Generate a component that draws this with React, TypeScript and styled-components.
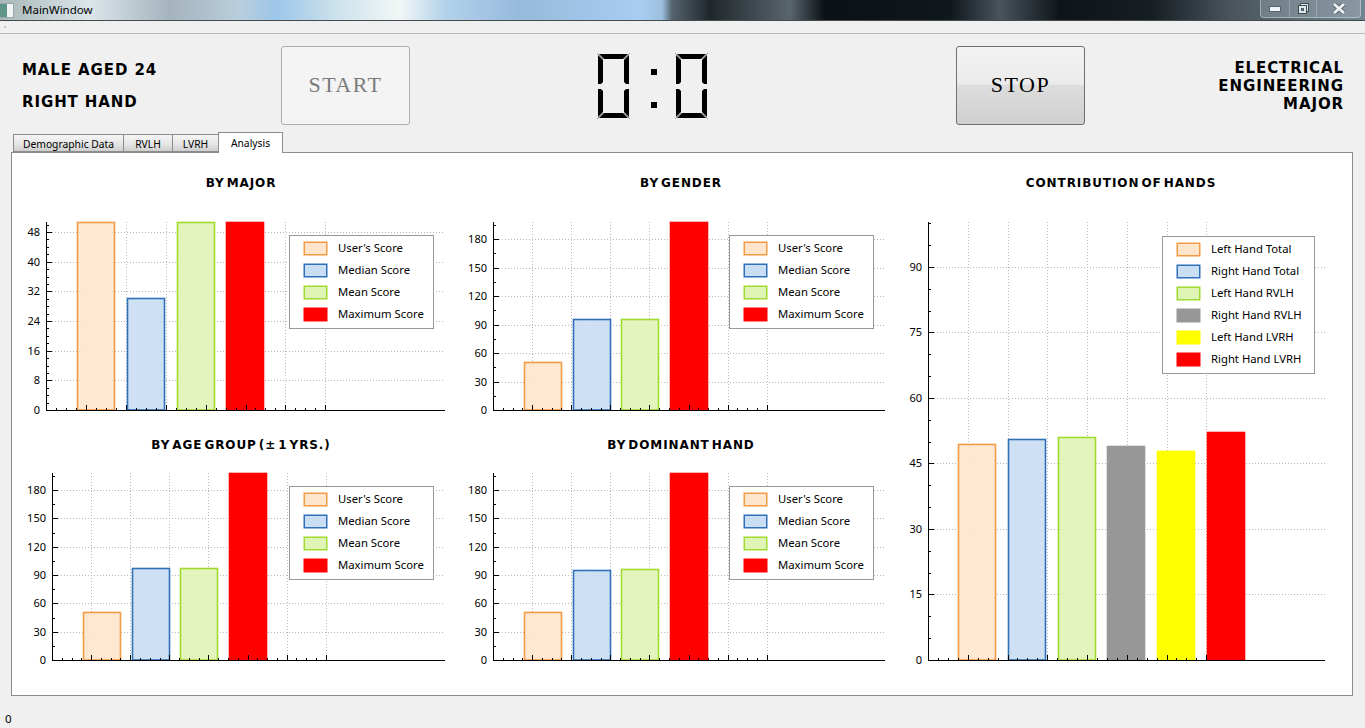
import React from "react";
import styled, { createGlobalStyle } from "styled-components";

const UI_FONT = `"Noto Sans", "DejaVu Sans", sans-serif`;
const HEAD_FONT = `"DejaVu Sans", "Liberation Sans", sans-serif`;

const GlobalStyle = createGlobalStyle`
  html, body {
    margin: 0;
    padding: 0;
    background: #f0f0f0;
  }
  #root {
    width: 1365px;
    height: 728px;
    overflow: hidden;
  }
`;

const Window = styled.div`
  width: 1365px;
  height: 728px;
  display: flex;
  flex-direction: column;
  background: #f0f0f0;
  color: #000;
  font-family: ${UI_FONT};
`;

const TitleBar = styled.div`
  height: 21px;
  flex: none;
  display: flex;
  align-items: flex-start;
  box-sizing: border-box;
  border-bottom: 1px solid #3d4a50;
  background: linear-gradient(
    90deg,
    #a9b7b8 0,
    #dbe6ea 90px,
    #a5b3bd 170px,
    #b9cedd 240px,
    #9cc6e8 275px,
    #cfe3ec 340px,
    #f2f7f6 400px,
    #b3d2ea 445px,
    #97b9dc 520px,
    #a8cdf0 640px,
    #9dbfdd 662px,
    #56646e 672px,
    #20272c 710px,
    #59656c 790px,
    #0b1116 825px,
    #10171d 950px,
    #49545b 1000px,
    #0e141a 1060px,
    #161d23 1150px,
    #49545b 1230px,
    #75858f 1365px
  );
`;

const AppIcon = styled.div`
  width: 14px;
  height: 15px;
  margin: 3px 8px 0 0;
  flex: none;
  box-sizing: border-box;
  border: 1px solid #9aa7a8;
  border-left: none;
  background: linear-gradient(90deg, #5f9488 0, #5f9488 55%, #f2f4f4 55%);
`;

const TitleText = styled.span`
  font-size: 11.5px;
  line-height: 20px;
`;

const WindowButtons = styled.div`
  margin-left: auto;
  margin-right: 4px;
  height: 18px;
  display: flex;
  box-sizing: border-box;
  border: 1px solid rgba(225, 235, 240, 0.45);
  border-top: none;
  border-radius: 0 0 4px 4px;
  background: rgba(190, 205, 215, 0.28);
`;

const WindowButton = styled.div<{ $width: number }>`
  width: ${(p) => p.$width}px;
  box-sizing: border-box;
  display: flex;
  align-items: center;
  justify-content: center;
  border-left: 1px solid rgba(225, 235, 240, 0.3);
  &:first-child {
    border-left: none;
  }
`;

const MenuBar = styled.div`
  height: 12px;
  flex: none;
  box-sizing: content-box;
  border-bottom: 1px solid #b9b9b9;
  display: flex;
  align-items: center;
  padding-left: 4px;
`;

const MenuDot = styled.div`
  width: 2px;
  height: 2px;
  background: #c4c4c4;
`;

const Header = styled.div`
  height: 98px;
  flex: none;
  box-sizing: border-box;
  padding: 12px 21px 0 22px;
  display: flex;
  align-items: flex-start;
`;

const HeaderLeft = styled.div`
  width: 259px;
  flex: none;
  padding-top: 8px;
`;

const HeaderRight = styled.div`
  width: 259px;
  height: 79px;
  flex: none;
  display: flex;
  flex-direction: column;
  justify-content: center;
  align-items: flex-end;
`;

const BoldLine = styled.div<{ $line: number }>`
  font-family: ${HEAD_FONT};
  font-weight: 700;
  font-size: 15px;
  letter-spacing: 0.9px;
  line-height: ${(p) => p.$line}px;
  white-space: nowrap;
`;

const BigButton = styled.button<{ $active?: boolean }>`
  width: 129px;
  height: 79px;
  flex: none;
  padding: 0 0 2px;
  box-sizing: border-box;
  border-radius: 3px;
  border: 1px solid ${(p) => (p.$active ? "#707070" : "#adadad")};
  background: ${(p) =>
    p.$active
      ? "linear-gradient(180deg, #f3f3f3 0, #ebebeb 48%, #dddddd 50%, #cfcfcf 100%)"
      : "#f4f4f4"};
  color: ${(p) => (p.$active ? "#000" : "#7b7b7b")};
  font-family: "Liberation Serif", serif;
  font-size: 22px;
  letter-spacing: 1.5px;
`;

const LcdSlot = styled.div`
  flex: 1;
  height: 79px;
  display: flex;
  justify-content: center;
  padding-right: 61px;
  padding-top: 7px;
  box-sizing: border-box;
`;

const Tabs = styled.div`
  height: 21px;
  flex: none;
  display: flex;
  align-items: flex-start;
  padding-left: 13px;
  position: relative;
  z-index: 1;
`;

const Tab = styled.div<{ $width: number; $selected?: boolean }>`
  width: ${(p) => p.$width}px;
  height: ${(p) => (p.$selected ? 21 : 18)}px;
  margin-top: ${(p) => (p.$selected ? 0 : 2)}px;
  box-sizing: border-box;
  border: 1px solid #8c8c8c;
  border-right-width: ${(p) => (p.$selected ? 1 : 0)}px;
  border-bottom: ${(p) => (p.$selected ? "none" : "1px solid #8c8c8c")};
  background: ${(p) =>
    p.$selected ? "#fff" : "linear-gradient(180deg, #f5f5f5 0, #e8e8e8 50%, #cfcfcf 100%)"};
  font-size: 10.3px;
  line-height: ${(p) => (p.$selected ? 20 : 18)}px;
  text-align: center;
  white-space: nowrap;
`;

const Panel = styled.div`
  width: 1342px;
  height: 544px;
  flex: none;
  margin: -1px 0 0 11px;
  box-sizing: border-box;
  border: 1px solid #8c8c8c;
  background: #fff;
  padding: 10px 0 0 9px;
  display: grid;
  grid-template-columns: repeat(3, 440px);
  grid-template-rows: 262px 255px;
`;

const ChartCard = styled.div<{ $tall?: boolean }>`
  display: flex;
  flex-direction: column;
  grid-row: ${(p) => (p.$tall ? "1 / span 2" : "auto")};
  grid-column: ${(p) => (p.$tall ? "3" : "auto")};
`;

const ChartTitle = styled.div`
  height: 40px;
  flex: none;
  font-family: ${HEAD_FONT};
  font-weight: 700;
  font-size: 12px;
  letter-spacing: 0.9px;
  word-spacing: -3px;
  line-height: 41px;
  text-align: center;
  white-space: nowrap;
`;

const PlotArea = styled.div`
  position: relative;
  flex: 1;
`;

const PlotSvg = styled.svg`
  display: block;
  font-family: ${UI_FONT};
  font-size: 11px;
`;

const Legend = styled.div<{ $top: number; $left: number; $width: number }>`
  position: absolute;
  top: ${(p) => p.$top}px;
  left: ${(p) => p.$left}px;
  width: ${(p) => p.$width}px;
  box-sizing: border-box;
  border: 1px solid #999;
  background: #fff;
  padding: 1px 0 3px 14px;
`;

const LegendRow = styled.div`
  height: 22px;
  display: flex;
  align-items: center;
  gap: 11px;
  font-size: 11.3px;
  white-space: nowrap;
`;

const LegendLabel = styled.span`
  margin-top: -1px;
`;

const Swatch = styled.span<{ $fill: string; $stroke: string }>`
  width: 23px;
  height: 13px;
  flex: none;
  box-sizing: border-box;
  background: ${(p) => p.$fill};
  border: 1.5px solid ${(p) => p.$stroke};
  box-shadow: 0 0 0 0.5px ${(p) => p.$stroke};
`;

const StatusBar = styled.div`
  flex: 1;
  padding: 15px 0 0 5px;
  font-size: 11.5px;
  line-height: 16px;
`;

type Series = { label: string; value: number; fill: string; stroke: string };

const orange = { fill: "#fee5cc", stroke: "#f39c45" };
const blue = { fill: "#c9def3", stroke: "#2f70b8" };
const green = { fill: "#e0f4b6", stroke: "#a0d92f" };
const red = { fill: "#ff0000", stroke: "#ff0000" };
const gray = { fill: "#979797", stroke: "#979797" };
const yellow = { fill: "#ffff00", stroke: "#ffff00" };

const scores = (user: number, median: number, mean: number, max: number): Series[] => [
  { label: "User's Score", value: user, ...orange },
  { label: "Median Score", value: median, ...blue },
  { label: "Mean Score", value: mean, ...green },
  { label: "Maximum Score", value: max, ...red },
];

const hands: Series[] = [
  { label: "Left Hand Total", value: 49.5, ...orange },
  { label: "Right Hand Total", value: 50.6, ...blue },
  { label: "Left Hand RVLH", value: 51, ...green },
  { label: "Right Hand RVLH", value: 49, ...gray },
  { label: "Left Hand LVRH", value: 47.9, ...yellow },
  { label: "Right Hand LVRH", value: 52.2, ...red },
];

type ChartProps = {
  title: string;
  series: Series[];
  axisX: number;
  top: number;
  bottom: number;
  height: number;
  yMax: number;
  yStep: number;
  yLabels: number;
  minorPerMajor: number;
  xStep: number;
  barStarts: number[];
  legendTop: number;
  legendLeft?: number;
  legendWidth?: number;
  tall?: boolean;
};

const AXIS_END = 424;
const BAR_WIDTH = 38;
const SCORE_BARS = [31, 80, 128, 177];

const Chart = ({
  title,
  series,
  axisX,
  top,
  bottom,
  height,
  yMax,
  yStep,
  yLabels,
  minorPerMajor,
  xStep,
  barStarts,
  legendTop,
  legendLeft = 268,
  legendWidth = 145,
  tall,
}: ChartProps) => {
  const plotH = bottom - top;
  const toY = (v: number) => bottom - (v / yMax) * plotH;
  const snap = (v: number) => Math.round(v) + 0.5;

  const majors = Array.from({ length: yLabels }, (_, i) => i * yStep);
  const minorStep = yStep / minorPerMajor;
  const minorCount = Math.floor(yMax / minorStep);
  const gridXs = Array.from({ length: 7 }, (_, i) => snap(axisX + (i + 1) * xStep));
  const xMinor = Array.from({ length: 28 }, (_, i) => snap(axisX + ((i + 1) * xStep) / 4));

  return (
    <ChartCard $tall={tall}>
      <ChartTitle>{title}</ChartTitle>
      <PlotArea>
        <PlotSvg width={440} height={height} viewBox={`0 0 440 ${height}`}>
          <g stroke="#b8b8b8" strokeDasharray="1 2" shapeRendering="crispEdges">
            {majors.slice(1).map((m) => (
              <line key={m} x1={axisX} x2={AXIS_END} y1={snap(toY(m))} y2={snap(toY(m))} />
            ))}
            {gridXs.map((x) => (
              <line key={x} x1={x} x2={x} y1={top} y2={bottom} />
            ))}
          </g>
          {series.map((s, i) => {
            const x = axisX + barStarts[i];
            const y = Math.round(toY(s.value));
            return (
              <rect
                key={s.label}
                x={x + 0.5}
                y={y + 0.5}
                width={BAR_WIDTH - 1}
                height={bottom - y - 0.5}
                fill={s.fill}
                fillOpacity={s.fill === orange.fill || s.fill === blue.fill || s.fill === green.fill ? 0.9 : 1}
                stroke={s.stroke}
                strokeWidth={1.6}
              />
            );
          })}
          <g stroke="#000" shapeRendering="crispEdges">
            <line x1={axisX + 0.5} x2={axisX + 0.5} y1={top} y2={bottom + 1} />
            <line x1={axisX} x2={AXIS_END} y1={bottom + 0.5} y2={bottom + 0.5} />
            {Array.from({ length: minorCount + 1 }, (_, i) => i).map((i) => {
              const y = snap(toY(i * minorStep));
              const len = i % minorPerMajor === 0 ? 6 : 3;
              return <line key={i} x1={axisX} x2={axisX + len} y1={y} y2={y} />;
            })}
            {xMinor.map((x, i) => (
              <line key={i} x1={x} x2={x} y1={bottom} y2={bottom - ((i + 1) % 4 === 0 ? 5 : 2)} />
            ))}
          </g>
          {majors.map((m) => (
            <text key={m} x={axisX - 6} y={toY(m) + 4} textAnchor="end" fill="#000">
              {m}
            </text>
          ))}
        </PlotSvg>
        <Legend $top={legendTop} $left={legendLeft} $width={legendWidth}>
          {series.map((s) => (
            <LegendRow key={s.label}>
              <Swatch $fill={s.fill} $stroke={s.stroke} />
              <LegendLabel>{s.label}</LegendLabel>
            </LegendRow>
          ))}
        </Legend>
      </PlotArea>
    </ChartCard>
  );
};

const LcdDigitZero = ({ x }: { x: number }) => (
  <g transform={`translate(${x} 0)`}>
    <g fill="#000">
      <polygon points="2,1 31,1 26,6 7,6" />
      <polygon points="7,60 26,60 31,65 2,65" />
      <polygon points="1,2 6,7 6,29 4,31 1,31" />
      <polygon points="32,2 27,7 27,29 29,31 32,31" />
      <polygon points="1,36 4,36 6,38 6,59 1,64" />
      <polygon points="32,36 29,36 27,38 27,59 32,64" />
    </g>
    <g stroke="#9a9a9a" strokeWidth="1">
      <line x1="0" y1="0" x2="6" y2="6" />
      <line x1="33" y1="0" x2="27" y2="6" />
      <line x1="0" y1="66" x2="6" y2="60" />
      <line x1="33" y1="66" x2="27" y2="60" />
    </g>
  </g>
);

const LcdDisplay = () => (
  <svg width={111} height={67} viewBox="0 0 111 67">
    <LcdDigitZero x={0} />
    <rect x={54} y={16} width={6} height={6} fill="#000" />
    <rect x={54} y={49} width={6} height={6} fill="#000" />
    <LcdDigitZero x={78} />
  </svg>
);

const App = () => {
  return (
    <Window>
      <GlobalStyle />
      <TitleBar>
        <AppIcon />
        <TitleText>MainWindow</TitleText>
        <WindowButtons>
          <WindowButton $width={28}>
            <svg width="12" height="6" viewBox="0 0 12 6">
              <rect x="0.5" y="0.5" width="11" height="5" fill="#f2f5f7" stroke="#55636c" />
            </svg>
          </WindowButton>
          <WindowButton $width={27}>
            <svg width="11" height="11" viewBox="0 0 11 11">
              <rect x="2.5" y="0.5" width="8" height="8" fill="#dfe6ea" stroke="#3f4b52" />
              <rect x="0.5" y="2.5" width="8" height="8" fill="#dfe6ea" stroke="#3f4b52" />
              <rect x="3" y="5" width="3" height="3" fill="#55636c" />
            </svg>
          </WindowButton>
          <WindowButton $width={44}>
            <svg width="14" height="11" viewBox="0 0 14 11">
              <path d="M2 1 L12 10 M12 1 L2 10" stroke="#55636c" strokeWidth="4.4" />
              <path d="M2 1 L12 10 M12 1 L2 10" stroke="#eef2f4" strokeWidth="2.8" />
            </svg>
          </WindowButton>
        </WindowButtons>
      </TitleBar>
      <MenuBar>
        <MenuDot />
      </MenuBar>
      <Header>
        <HeaderLeft>
          <BoldLine $line={32}>MALE AGED 24</BoldLine>
          <BoldLine $line={32}>RIGHT HAND</BoldLine>
        </HeaderLeft>
        <BigButton disabled>START</BigButton>
        <LcdSlot>
          <LcdDisplay />
        </LcdSlot>
        <BigButton $active>STOP</BigButton>
        <HeaderRight>
          <BoldLine $line={18}>ELECTRICAL</BoldLine>
          <BoldLine $line={18}>ENGINEERING</BoldLine>
          <BoldLine $line={18}>MAJOR</BoldLine>
        </HeaderRight>
      </Header>
      <Tabs>
        <Tab $width={110}>Demographic Data</Tab>
        <Tab $width={49}>RVLH</Tab>
        <Tab $width={46}>LVRH</Tab>
        <Tab $width={65} $selected>
          Analysis
        </Tab>
      </Tabs>
      <Panel>
        <Chart
          title="BY MAJOR"
          series={scores(50.7, 30.1, 50.7, 50.7)}
          axisX={25}
          top={19}
          bottom={207}
          height={222}
          yMax={50.7}
          yStep={8}
          yLabels={7}
          minorPerMajor={4}
          xStep={39.9}
          barStarts={[31, 81, 131, 180]}
          legendTop={32}
        />
        <Chart
          title="BY GENDER"
          series={scores(50.5, 96, 96, 198)}
          axisX={32}
          top={19}
          bottom={207}
          height={222}
          yMax={198}
          yStep={30}
          yLabels={7}
          minorPerMajor={2}
          xStep={39.1}
          barStarts={SCORE_BARS}
          legendTop={32}
        />
        <Chart
          title="CONTRIBUTION OF HANDS"
          series={hands}
          axisX={27}
          top={19}
          bottom={457}
          height={477}
          yMax={100.3}
          yStep={15}
          yLabels={7}
          minorPerMajor={3}
          xStep={39.75}
          barStarts={[30, 80, 130, 179, 229, 279]}
          legendTop={33}
          legendLeft={261}
          legendWidth={153}
          tall
        />
        <Chart
          title="BY AGE GROUP (± 1 YRS.)"
          series={scores(50.5, 97, 97, 198)}
          axisX={31}
          top={8}
          bottom={195}
          height={215}
          yMax={198}
          yStep={30}
          yLabels={7}
          minorPerMajor={2}
          xStep={39.1}
          barStarts={SCORE_BARS}
          legendTop={21}
        />
        <Chart
          title="BY DOMINANT HAND"
          series={scores(50.5, 95, 96, 198)}
          axisX={32}
          top={8}
          bottom={195}
          height={215}
          yMax={198}
          yStep={30}
          yLabels={7}
          minorPerMajor={2}
          xStep={39.1}
          barStarts={SCORE_BARS}
          legendTop={21}
        />
      </Panel>
      <StatusBar>0</StatusBar>
    </Window>
  );
};

export default App;
